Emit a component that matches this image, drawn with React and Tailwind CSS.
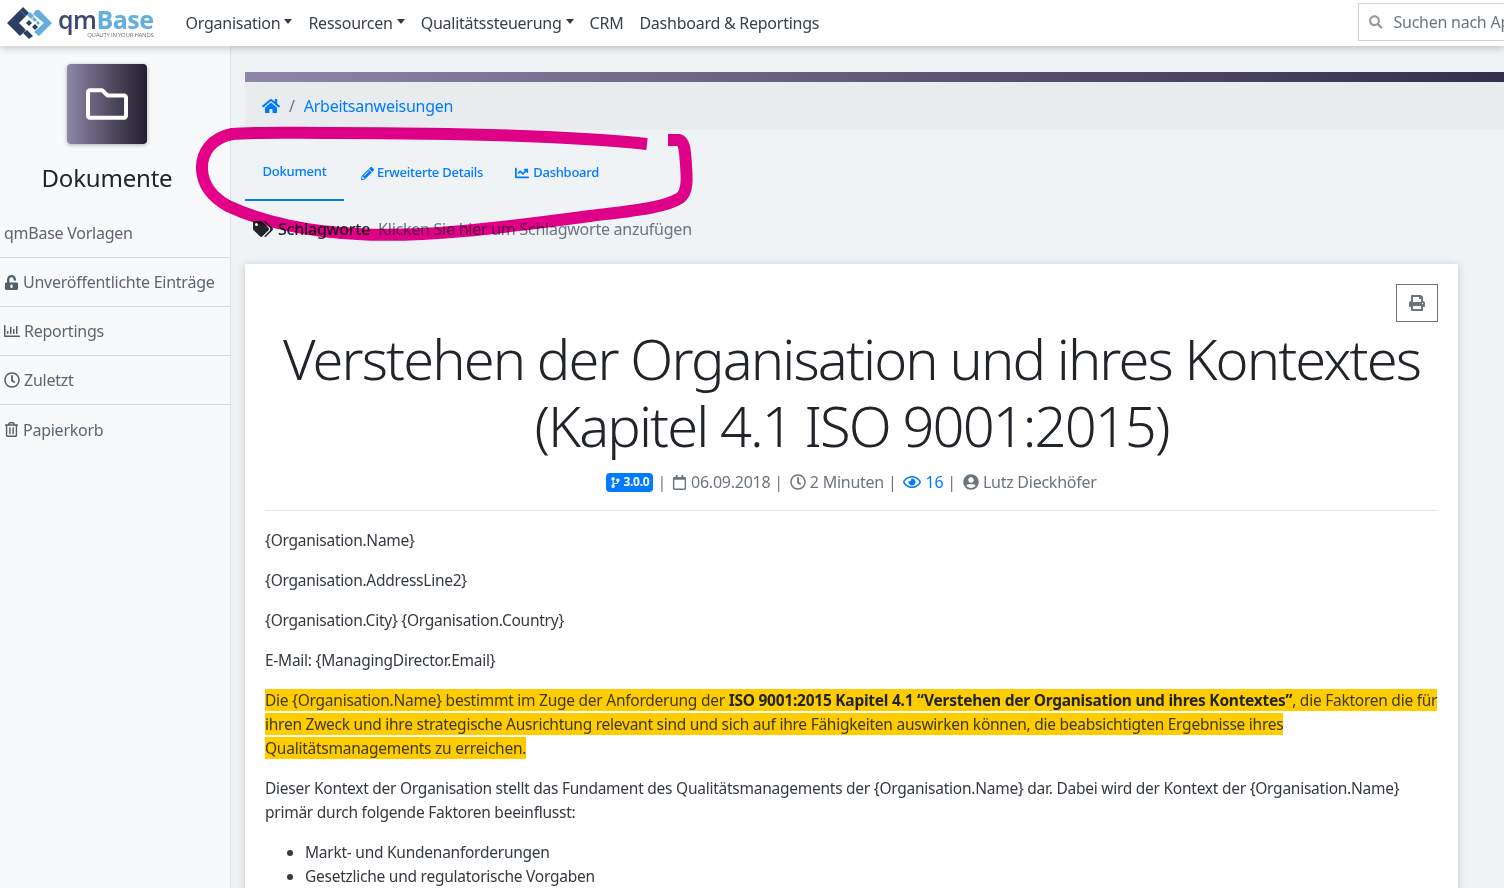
import React from "react";
import {
  FaHome, FaPencilAlt, FaChartLine, FaTags, FaUnlockAlt, FaRegChartBar, FaRegClock,
  FaRegTrashAlt, FaRegCalendar, FaRegEye, FaUserCircle, FaPrint, FaSearch, FaCodeBranch, FaRegFolder,
} from "react-icons/fa";

function Logo() {
  return (
    <div className="flex items-center">
      <svg width="50" height="34" viewBox="0 0 50 34" className="ml-[5px]">
        <path d="M15 4 L2 17 L15 30 L21 24 L14 17 L21 10 Z" fill="#2c3e63" />
        <path d="M15 4 L21 10 L24 7 L18 1 Z" fill="#2c3e63" />
        <path d="M22 24 L28 30 L24 33 L18 27 Z" fill="#2c3e63" />
        <path d="M34 4 L47 17 L34 30 L29 26 L39 17 L28 8 L31 4 Z" fill="#62aee0" />
        <path d="M21 17 l3 -3 l3 3 l-3 3 Z" fill="#2c3e63" />
        <path d="M27 13 l2 -2 l3 3 l-2 2 Z" fill="#62aee0" />
        <path d="M27 21 l3 -3 l3 3 l-3 3 Z" fill="#2c3e63" />
        <path d="M31 17 l2 -2 l2 2 l-2 2 Z" fill="#62aee0" />
        <path d="M22 9 l3 -3 l4 4 l-3 3 Z" fill="#62aee0" />
      </svg>
      <div className="ml-[3px] flex flex-col items-end font-['Open_Sans',sans-serif]">
        <div className="text-[25px] leading-[23px] font-semibold tracking-[-0.5px] mt-[-1px]">
          <span className="text-[#3b4a6b]">qm</span><span className="text-[#62aee0] font-bold">Base</span>
        </div>
        <div className="text-[6px] leading-[6px] text-[#6b7280] mt-[1px] whitespace-nowrap">QUALITY IN YOUR HANDS</div>
      </div>
    </div>
  );
}

function NavItem({ children, caret }) {
  return (
    <span className="flex items-center text-[16px] text-[#3a4149] whitespace-nowrap">
      {children}
      {caret && <span className="ml-[4px] mb-[3px] border-t-[5px] border-x-[4.5px] border-x-transparent border-t-[#343a40]" />}
    </span>
  );
}

function SideRow({ icon, children, border = true, gap = "gap-[4px]" }) {
  return (
    <div className={`h-[49px] flex items-center ${gap} pl-[4px] text-[16px] text-[#5c6670] ${border ? "border-b border-[#d8dbde]" : ""}`}>
      {icon}
      <span>{children}</span>
    </div>
  );
}

function P({ children, className = "" }) {
  return <p className={`mb-[16px] ${className}`}>{children}</p>;
}

export default function App() {
  return (
    <div className="relative h-[888px] w-full overflow-hidden bg-[#f0f3f5] font-['Noto_Sans',sans-serif] tracking-[-0.25px] text-[#212529]">
      <header className="relative z-10 h-[46px] bg-white shadow-[0_2px_8px_rgba(0,0,0,0.22)] flex items-center">
        <Logo />
        <nav className="flex items-center gap-[16px] ml-[32px]">
          <NavItem caret>Organisation</NavItem>
          <NavItem caret>Ressourcen</NavItem>
          <NavItem caret>Qualitätssteuerung</NavItem>
          <NavItem>CRM</NavItem>
          <NavItem>Dashboard &amp; Reportings</NavItem>
        </nav>
        <div className="absolute left-[1358px] top-[3px] w-[170px] h-[38px] border border-[#ced4da] bg-white flex items-center pl-[10px] gap-[11px] text-[#6c757d] text-[16px] whitespace-nowrap">
          <FaSearch className="text-[#9a9a9a] text-[16px]" />
          <span>Suchen nach Apps</span>
        </div>
      </header>

      <div className="flex h-[842px]">
        <aside className="w-[231px] shrink-0 bg-[#f8f9fa] border-r border-[#dfe2e5] flex flex-col">
          <div className="self-center mt-[18px] w-[80px] h-[80px] rounded-[4px] bg-gradient-to-r from-[#8f87a8] to-[#24202f] shadow-[0_1px_4px_rgba(0,0,0,0.3)] flex items-center justify-center ml-[-16px]">
            <FaRegFolder className="text-white text-[42px]" />
          </div>
          <h2 className="text-[24px] leading-[29px] text-center mt-[19px] ml-[-16px] tracking-[-0.2px]">Dokumente</h2>
          <div className="mt-[17px]">
            <SideRow>qmBase Vorlagen</SideRow>
            <SideRow icon={<FaUnlockAlt className="text-[15px] text-[#555e66]" />}>Unveröffentlichte Einträge</SideRow>
            <SideRow icon={<FaRegChartBar className="text-[16px] text-[#555e66]" />}>Reportings</SideRow>
            <SideRow icon={<FaRegClock className="text-[16px] text-[#555e66]" />}>Zuletzt</SideRow>
            <SideRow border={false} icon={<FaRegTrashAlt className="text-[15px] text-[#555e66]" />}>Papierkorb</SideRow>
          </div>
        </aside>

        <main className="flex-1 min-w-0 pl-[14px] pt-[26px]">
          <div className="h-[10px] bg-gradient-to-r from-[#8f87a8] to-[#35304a]" />
          <div className="h-[48px] bg-[#e9ecef] flex items-center pl-[17px] text-[16px]">
            <FaHome className="text-[#007bff] text-[18px]" />
            <span className="text-[#6c757d] mx-[9px]">/</span>
            <span className="text-[#007bff]">Arbeitsanweisungen</span>
          </div>

          <div className="mt-[19px] h-[52px] flex text-[13px] font-medium text-[#007bff]">
            <div className="w-[99px] border-b-2 border-[#007bff] flex items-center justify-center pb-[4px]">Dokument</div>
            <div className="flex items-center gap-[3px] pl-[17px] pb-[4px]"><FaPencilAlt className="text-[13px]" />Erweiterte Details</div>
            <div className="flex items-center gap-[4px] pl-[32px] pb-[4px]"><FaChartLine className="text-[14px]" />Dashboard</div>
          </div>

          <div className="mt-[16px] h-[24px] flex items-center pl-[8px] text-[16px]">
            <FaTags className="text-[#212529] text-[20px]" />
            <span className="ml-[5px] font-medium">Schlagworte</span>
            <span className="ml-[8px] text-[#6c757d]">Klicken Sie hier um Schlagworte anzufügen</span>
          </div>

          <article className="relative mt-[23px] w-[1213px] bg-white shadow-[0_1px_8px_rgba(0,0,0,0.18)] px-[20px] pt-[20px] text-[15.5px] leading-[24px] text-[#343a40] h-[700px]">
            <div className="flex justify-end">
              <div className="w-[42px] h-[38px] border border-[#6c757d] flex items-center justify-center">
                <FaPrint className="text-[#6c757d] text-[16px]" />
              </div>
            </div>
            <h1 className="mt-[3px] text-[56px] leading-[67px] font-light text-center text-[#212529] tracking-[-1.9px]">
              Verstehen der Organisation und ihres Kontextes<br />(Kapitel 4.1 ISO 9001:2015)
            </h1>
            <div className="mt-[11px] flex items-center justify-center text-[16px] leading-[24px] text-[#6c757d]">
              <span className="inline-flex items-center gap-[2px] h-[19px] px-[4px] rounded-[4px] bg-[#007bff] text-white text-[12px] font-bold mr-[4px]">
                <FaCodeBranch className="text-[11px]" />3.0.0
              </span>
              <span>|</span>
              <FaRegCalendar className="ml-[6px] mr-[4px] text-[15px]" />
              <span>06.09.2018 |</span>
              <FaRegClock className="ml-[7px] mr-[4px] text-[16px]" />
              <span>2 Minuten |</span>
              <FaRegEye className="ml-[7px] mr-[4px] text-[18px] text-[#007bff]" />
              <span className="text-[#007bff]">16</span>
              <span className="ml-[4px]">|</span>
              <FaUserCircle className="ml-[7px] mr-[4px] text-[16px]" />
              <span>Lutz Dieckhöfer</span>
            </div>
            <hr className="mt-[16px] mb-[17px] border-[#e5e5e5]" />
            <P>{"{Organisation.Name}"}</P>
            <P>{"{Organisation.AddressLine2}"}</P>
            <P>{"{Organisation.City} {Organisation.Country}"}</P>
            <P>{"E-Mail: {ManagingDirector.Email}"}</P>
            <P>
              <span className="bg-[#ffcc00] text-[#3d3a20]">
                Die {"{Organisation.Name}"} bestimmt im Zuge der Anforderung der <strong className="text-[#212529]">ISO 9001:2015 Kapitel 4.1 “Verstehen der Organisation und ihres Kontextes”</strong>, die Faktoren die für ihren Zweck und ihre strategische Ausrichtung relevant sind und sich auf ihre Fähigkeiten auswirken können, die beabsichtigten Ergebnisse ihres Qualitätsmanagements zu erreichen.
              </span>
            </P>
            <P>
              Dieser Kontext der Organisation stellt das Fundament des Qualitätsmanagements der {"{Organisation.Name}"} dar. Dabei wird der Kontext der {"{Organisation.Name}"} primär durch folgende Faktoren beeinflusst:
            </P>
            <ul className="list-disc pl-[40px]">
              <li>Markt- und Kundenanforderungen</li>
              <li>Gesetzliche und regulatorische Vorgaben</li>
            </ul>
          </article>
        </main>
      </div>

      <svg className="absolute left-0 top-0 z-20 pointer-events-none mix-blend-multiply" width="1504" height="888" viewBox="0 0 1504 888">
        <path
          d="M647 144 C560 135 450 133 330 133 C290 133 255 132 232 134 C212 138 201 152 202 170 C203 186 212 197 228 206 C262 222 310 232 357 234 C420 238 500 228 590 216 C630 211 665 208 680 198 C688 192 687 178 686 165 C685 152 685 142 679 140 L668 140"
          fill="none" stroke="#ec008c" strokeWidth="12" strokeLinejoin="round"
        />
      </svg>
    </div>
  );
}
